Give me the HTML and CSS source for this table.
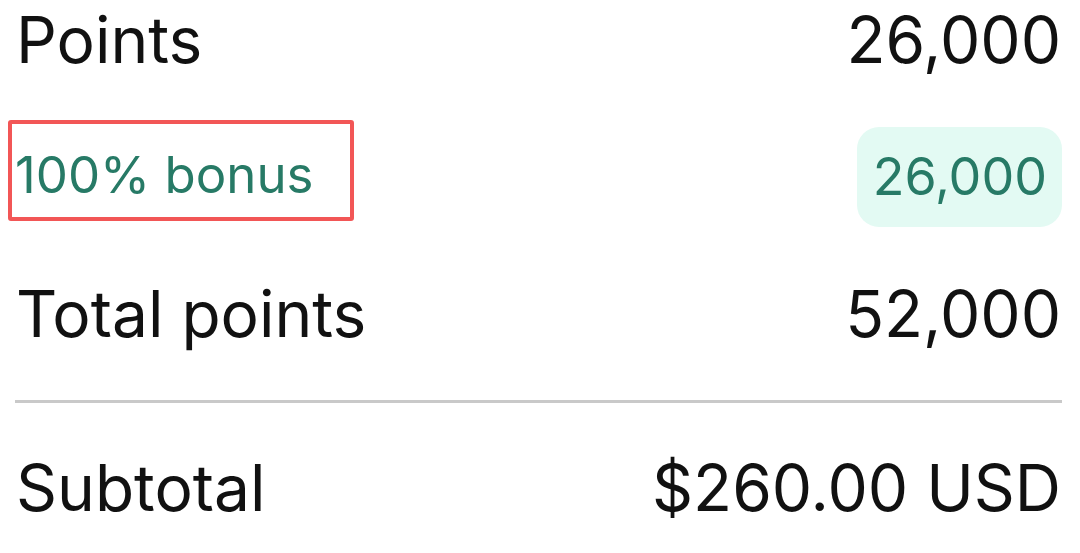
FILE: index.html
```html
<!DOCTYPE html>
<html lang="en">
<head>
    <meta charset="UTF-8">
    <meta name="viewport" content="width=device-width, initial-scale=1.0">
    <title>Order summary</title>
    <link rel="stylesheet" href="styles.css">
</head>
<body>
    <div id="summary">
        <div class="row" id="points">
            <span>Points</span>
            <span>26,000</span>
        </div>
        <div class="row bonus" id="bonus">
            <span class="mark">100% bonus</span>
            <span class="pill">26,000</span>
        </div>
        <div class="row" id="total">
            <span>Total points</span>
            <span>52,000</span>
        </div>
        <hr class="line">
        <div class="row" id="subtotal">
            <span>Subtotal</span>
            <span>$260.00 USD</span>
        </div>
    </div>
</body>
</html>
```

FILE: styles.css
```css
body{
    margin: 0;
    background: #fff;
    font-family: Inter, "Liberation Sans", sans-serif;
    color: #111;
}
#summary{
    padding: 0 19px 0 16px;
}
.row{
    display: flex;
    justify-content: space-between;
    align-items: center;
    font-size: 64px;
    line-height: 75px;
}
#points{
    margin-top: 2px;
}
.bonus{
    height: 100px;
    margin-top: 50px;
    font-size: 51px;
    color: #277a66;
}
.mark{
    margin: 0 0 13px -8px;
    padding: 9px 36px 0 3px;
    line-height: 84px;
    border: 4px solid #f25656;
    border-radius: 3px;
}
.pill{
    background: #e3faf3;
    border-radius: 22px;
    padding: 0 15px 0 16px;
    font-size: 52px;
    line-height: 100px;
    margin-right: -1px;
}
#total{
    margin-top: 49px;
}
.line{
    margin: 49px -1px 0 -1px;
    border: 0;
    height: 3px;
    background: #c9c9c9;
}
#subtotal{
    margin-top: 47px;
}
```
